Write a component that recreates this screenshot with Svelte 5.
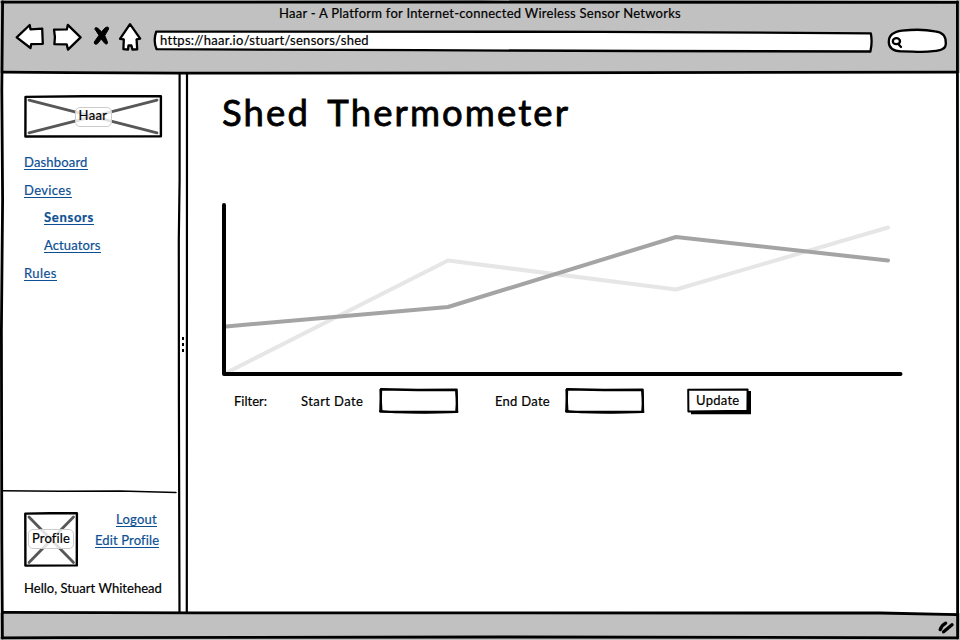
<script>
  const nav = [
    { label: 'Dashboard', spacing: 0.18 },
    { label: 'Devices', spacing: 0.37 },
    { label: 'Sensors', spacing: 0.7, child: true, active: true },
    { label: 'Actuators', spacing: 0.12, child: true },
    { label: 'Rules', spacing: 0.45 }
  ];
  const series = [
    { color: '#e6e6e6', points: '226,373 448,260.5 676,289.5 888,227.5' },
    { color: '#a4a4a4', points: '226,326.5 448,307 676,237 888,260.5' }
  ];
</script>

<div class="window">
  <header>
    <div class="title">Haar - A Platform for Internet-connected Wireless Sensor Networks</div>
    <div class="toolbar">
      <svg class="tool" width="36" height="36" viewBox="12 20 36 36">
        <path d="M16.7 37.3 L29.7 25 L30.5 29.4 L42.2 28.6 L42.8 43.8 L31.2 44.2 L30.5 48 Z" />
      </svg>
      <svg class="tool" width="38" height="36" viewBox="48 20 38 36">
        <path d="M54 29.6 L66.8 29.4 L67.8 24.9 L80.6 37.4 L68 49.6 L66.7 44.4 L54.4 44.2 Q55.6 37 54 29.6 Z" />
      </svg>
      <svg class="stop" width="28" height="36" viewBox="86 20 28 36">
        <path d="M94.8 28.4 Q95.5 26.6 98 28.4 L101.5 31.8 L105.4 27.6 Q109 26 108.6 29 L104.8 35.6 L107.4 42 Q107.8 45 105 43.6 L101.2 39.1 L97.4 43.8 Q94 45.2 94.3 41.9 L98.8 35.6 Z" />
      </svg>
      <svg class="tool" width="36" height="36" viewBox="114 20 36 36">
        <path d="M130 24.2 L140.2 38.6 L136.6 39.4 L137.2 49.4 L132.4 49.5 L131.4 45.5 L128.5 45.5 L128 49.5 L123.4 49.2 L123.8 39.4 L120 38.8 Z" />
      </svg>
      <div class="url">
        <svg width="726" height="36" viewBox="150 20 726 36">
          <path class="ink" d="M156.2 31.6 L600 31.8 L870.8 33.3 Q872.6 42 870.4 51.5 L640 51 L420 50.2 L156.6 49.2 Q153 41 156.2 31.6 Z" />
        </svg>
        <span>https://haar.io/stuart/sensors/shed</span>
      </div>
      <svg class="tool" width="72" height="36" viewBox="880 20 72 36">
        <path d="M888.8 42 C888.6 34 895 31.6 902 30.7 C913 29.4 925 29.3 935 31.4 C944 32.4 946 37 945.8 43 C946.2 49 941 50.5 933 51.2 C922 52.6 912 51.2 901 51.4 C893 51 888.8 48 888.8 42 Z" />
        <ellipse cx="896.4" cy="41.2" rx="3.6" ry="3" />
        <path d="M898 43.8 L901 47" />
      </svg>
    </div>
  </header>

  <div class="body">
    <aside>
      <div class="brand">
        <svg width="140" height="44" viewBox="23 94 140 44">
          <path class="cross" d="M29 100.2 L157 132.8 M29 132.8 L157 100.2" />
          <path class="box" d="M25.5 96.9 L84 96.2 L160.9 96.2 L160.9 136.3 L25.4 136.5 Z" />
        </svg>
        <span class="tag">Haar</span>
      </div>
      <nav>
        {#each nav as item}
          <a href="#top" class:child={item.child} class:active={item.active} style:letter-spacing="{item.spacing}px">{item.label}</a>
        {/each}
      </nav>
      <section class="account">
        <svg class="rule" width="176" height="6" viewBox="2 488 176 6">
          <path d="M2 490.8 L60 491.2 L120 491 L176 492.4" />
        </svg>
        <div class="user">
          <div class="avatar">
            <svg width="56" height="56" viewBox="23 511 56 56">
              <path class="cross" d="M29 517 L73.5 562.5 M73.5 517 L29 562.5" />
              <path class="box" d="M25.3 513.6 L50 513.2 L76.9 513.2 L76.8 565.4 L25.4 565.6 Z" />
            </svg>
            <span class="tag">Profile</span>
          </div>
          <div class="links">
            <a href="#logout" class="logout">Logout</a>
            <a href="#edit">Edit Profile</a>
          </div>
        </div>
        <p>Hello, Stuart Whitehead</p>
      </section>
    </aside>

    <div class="splitter">
      <i></i><i></i><i></i>
    </div>

    <main>
      <h1>Shed Thermometer</h1>
      <svg class="chart" width="690" height="184" viewBox="216 197 690 184">
        {#each series as s}
          <polyline points={s.points} stroke={s.color} />
        {/each}
        <path d="M224 205 V374 H900.5" stroke="#000" />
      </svg>
      <form onsubmit={(e) => e.preventDefault()}>
        <span class="filter">Filter:</span>
        <label class="start">Start Date
          <svg width="82" height="28" viewBox="377 387 82 28">
            <path class="box" d="M381 389.2 L418 390 L456.6 389.8 L457 411.8 L418 412 L380.4 411.6 Z" />
            <path class="scuff" d="M380 411 L395 412.4 L425 412.8 L457.5 412 M380.4 389.6 L381.6 411 M456 390 L457.2 401 L456.2 411" />
          </svg>
        </label>
        <label class="end">End Date
          <svg width="82" height="28" viewBox="377 387 82 28">
            <path class="box" d="M381 389.2 L418 390 L456.6 389.8 L457 411.8 L418 412 L380.4 411.6 Z" />
            <path class="scuff" d="M380 411 L395 412.4 L425 412.8 L457.5 412 M380.4 389.6 L381.6 411 M456 390 L457.2 401 L456.2 411" />
          </svg>
        </label>
        <button>
          <svg width="66" height="28" viewBox="686 387 66 28">
            <path d="M691 391 H751 V414.3 H691 Z" />
            <path class="face" d="M688.2 389.8 L747.6 389.6 L747.4 410.8 L688.4 411.6 Z" />
          </svg>
          <span>Update</span>
        </button>
      </form>
    </main>
  </div>

  <footer>
    <svg width="20" height="18" viewBox="936 618 20 18">
      <path d="M940.2 629.6 Q942 624.8 945.6 623.2 M943.6 631.8 L952 624.8" />
    </svg>
  </footer>

  <svg class="frame" width="960" height="640" viewBox="0 0 960 640">
    <path d="M2 2.2 L480 2 L957.6 2.4" />
    <path d="M2.6 2 L1.8 90 L2.6 200 L1.4 330 L1.8 540 L2.4 638" />
    <path d="M957.4 2 L957.6 300 L957.6 638" />
    <path d="M2 637.8 L60 637.6 L500 637 L957.6 637.8" />
    <path d="M3 72.2 L70 72.6 L180 73.2 L500 72.8 L957 72.2" />
    <path d="M3 612.4 L200 612.9 L880 613 L957 614.6" />
    <path class="bar" d="M179.6 74 L179.6 180 L178.8 240 L178.9 400 L179.5 612" />
    <path class="bar" d="M187 74 L186.8 612" />
  </svg>
</div>

<style>
  :global(body) { margin: 0; background: #fff; }
  .window {
    position: relative;
    display: flex;
    flex-direction: column;
    width: 960px;
    height: 640px;
    overflow: hidden;
    background: #fff;
    color: #000;
    font: 13px/16px Lato, "Liberation Sans", sans-serif;
    -webkit-text-stroke: 0.2px currentColor;
  }
  svg { display: block; flex: none; fill: none; stroke-linecap: round; stroke-linejoin: round; }
  header { height: 73px; flex: none; background: #c1c1c1; }
  .title { padding-top: 5px; height: 15px; text-align: center; letter-spacing: 0.26px; }
  .toolbar { display: flex; padding-left: 12px; }
  .toolbar > svg { fill: #000; }
  .toolbar > .stop { stroke: #000; stroke-width: 1; }
  .toolbar > .tool, .ink { fill: #fff; stroke: #000; stroke-width: 2.3; }
  .url { display: grid; margin-right: 4px; }
  .url > * { grid-area: 1 / 1; }
  .url span { padding: 12px 0 0 10px; letter-spacing: 0.28px; }
  .body { display: flex; flex: 1; min-height: 0; }
  aside { display: flex; flex-direction: column; width: 179px; box-sizing: border-box; padding: 21px 0 0 23px; }
  .brand, .avatar { display: grid; place-items: center; }
  .brand { width: 140px; height: 44px; }
  .brand > *, .avatar > * { grid-area: 1 / 1; }
  .box { stroke: #000; stroke-width: 2.4; }
  .cross { stroke: #575757; stroke-width: 2.8; }
  .tag {
    z-index: 1;
    box-sizing: border-box;
    height: 20px;
    padding: 0 3px;
    border: 1px solid #ccc;
    border-radius: 5px;
    background: rgba(255, 255, 255, 0.82);
    line-height: 16px;
    letter-spacing: 0.17px;
  }
  .brand .tag { margin-top: 2px; line-height: 15px; letter-spacing: 0.4px; }
  a {
    display: block;
    box-sizing: border-box;
    width: fit-content;
    height: 16px;
    border-bottom: 1px solid #0c4f94;
    color: #0c4f94;
    text-decoration: none;
  }
  nav { display: flex; flex-direction: column; gap: 11.8px; margin: 16px 0 0 1px; }
  nav .child { margin-left: 20px; }
  nav .active { margin-top: -0.5px; margin-bottom: 0.5px; font-weight: 700; }
  .account { margin-top: auto; height: 125px; }
  .rule { margin-left: -21px; stroke: #000; stroke-width: 1.5; }
  .user { display: flex; margin-top: 17px; }
  .avatar { width: 56px; height: 56px; }
  .links { display: flex; flex-direction: column; gap: 5px; margin-left: 16px; letter-spacing: 0.13px; }
  .logout { margin-left: 21px; letter-spacing: 0.25px; }
  p { margin: 13px 0 0 1px; letter-spacing: 0.03px; }
  .splitter { display: flex; flex-direction: column; align-items: center; justify-content: center; gap: 3px; width: 8px; padding-top: 3px; box-sizing: border-box; }
  .splitter i { width: 2px; height: 3px; background: #000; }
  main { flex: 1; padding: 17px 0 0 29px; }
  h1 {
    margin: 0 0 0 6px;
    height: 107px;
    font-size: 36.5px;
    line-height: 44px;
    font-weight: 400;
    letter-spacing: 2.1px;
    word-spacing: 7px;
    -webkit-text-stroke: 0.8px #000;
  }
  .chart { stroke-width: 4; }
  form { display: flex; align-items: center; margin: 6px 0 0 18px; height: 28px; }
  label { display: flex; align-items: center; }
  .filter { width: 67px; }
  .start { width: 194px; letter-spacing: 0.42px; }
  .start svg { margin-left: 14px; }
  .end { width: 191px; letter-spacing: 0.27px; }
  .end svg { margin-left: 13px; }
  .scuff { stroke: #000; stroke-width: 1.8; }
  button { display: grid; padding: 0; border: 0; background: none; color: #000; font: inherit; letter-spacing: 0.28px; -webkit-text-stroke: inherit; }
  button > * { grid-area: 1 / 1; }
  button svg { fill: #000; }
  button .face { fill: #fff; stroke: #000; stroke-width: 2; }
  button span { padding: 5px 0 0 10px; text-align: left; }
  footer { display: flex; justify-content: flex-end; height: 27px; padding: 5px 4px 0 0; box-sizing: border-box; background: #c1c1c1; }
  footer svg { stroke: #000; stroke-width: 3.4; }
  .frame { position: absolute; inset: 0; pointer-events: none; stroke: #000; stroke-width: 2.8; }
  .frame .bar { stroke-width: 2.2; }
</style>
